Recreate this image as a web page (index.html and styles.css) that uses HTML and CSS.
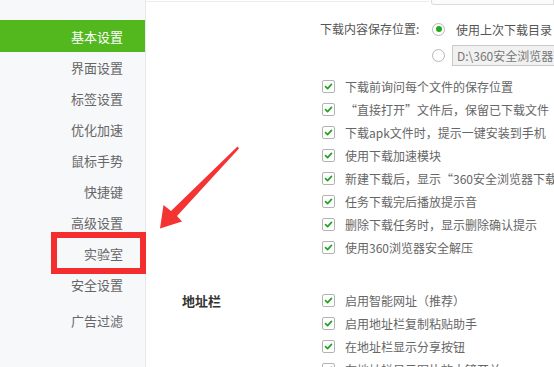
FILE: index.html
```html
<!DOCTYPE html>
<html lang="zh-CN">
<head>
<meta charset="utf-8">
<link rel="stylesheet" href="styles.css">
</head>
<body>
<div class="app">
  <nav class="sidebar">
    <div class="nav-item active">基本设置</div>
    <div class="nav-item">界面设置</div>
    <div class="nav-item">标签设置</div>
    <div class="nav-item">优化加速</div>
    <div class="nav-item">鼠标手势</div>
    <div class="nav-item">快捷键</div>
    <div class="nav-item">高级设置</div>
    <div class="nav-item">实验室</div>
    <div class="nav-item">安全设置</div>
    <div class="nav-item last">广告过滤</div>
  </nav>
  <main class="main">
    <div class="topbar"><div class="top-line"></div><div class="top-box"></div></div>
    <section class="section">
      <div class="sec-label"></div>
      <div class="sec-body">
        <div class="save-grid">
          <div class="save-label">下载内容保存位置:</div>
          <div class="opt"><span class="radio on"></span><span class="opt-text">使用上次下载目录</span></div>
          <div></div>
          <div class="opt"><span class="radio"></span><div class="path-input">D:\360安全浏览器下载</div></div>
        </div>
        <div class="checks">
          <div class="check-row"><span class="cb"><svg viewBox="0 0 13 13"><path d="M3 6.6l2.4 2.4 4.6-5" /></svg></span><span>下载前询问每个文件的保存位置</span></div>
          <div class="check-row"><span class="cb"><svg viewBox="0 0 13 13"><path d="M3 6.6l2.4 2.4 4.6-5" /></svg></span><span>“直接打开”文件后，保留已下载文件</span></div>
          <div class="check-row"><span class="cb"><svg viewBox="0 0 13 13"><path d="M3 6.6l2.4 2.4 4.6-5" /></svg></span><span>下载apk文件时，提示一键安装到手机</span></div>
          <div class="check-row"><span class="cb"><svg viewBox="0 0 13 13"><path d="M3 6.6l2.4 2.4 4.6-5" /></svg></span><span>使用下载加速模块</span></div>
          <div class="check-row"><span class="cb"><svg viewBox="0 0 13 13"><path d="M3 6.6l2.4 2.4 4.6-5" /></svg></span><span>新建下载后，显示“360安全浏览器下载”窗口</span></div>
          <div class="check-row"><span class="cb"><svg viewBox="0 0 13 13"><path d="M3 6.6l2.4 2.4 4.6-5" /></svg></span><span>任务下载完后播放提示音</span></div>
          <div class="check-row"><span class="cb"><svg viewBox="0 0 13 13"><path d="M3 6.6l2.4 2.4 4.6-5" /></svg></span><span>删除下载任务时，显示删除确认提示</span></div>
          <div class="check-row"><span class="cb"><svg viewBox="0 0 13 13"><path d="M3 6.6l2.4 2.4 4.6-5" /></svg></span><span>使用360浏览器安全解压</span></div>
        </div>
      </div>
    </section>
    <section class="section addr">
      <div class="sec-label bold">地址栏</div>
      <div class="sec-body">
        <div class="checks">
          <div class="check-row"><span class="cb"><svg viewBox="0 0 13 13"><path d="M3 6.6l2.4 2.4 4.6-5" /></svg></span><span>启用智能网址（推荐）</span></div>
          <div class="check-row"><span class="cb"><svg viewBox="0 0 13 13"><path d="M3 6.6l2.4 2.4 4.6-5" /></svg></span><span>启用地址栏复制粘贴助手</span></div>
          <div class="check-row"><span class="cb"><svg viewBox="0 0 13 13"><path d="M3 6.6l2.4 2.4 4.6-5" /></svg></span><span>在地址栏显示分享按钮</span></div>
          <div class="check-row"><span class="cb"><svg viewBox="0 0 13 13"><path d="M3 6.6l2.4 2.4 4.6-5" /></svg></span><span>在地址栏显示图片放大镜开关</span></div>
        </div>
      </div>
    </section>
  </main>
  <div class="highlight"></div>
  <svg class="arrow" width="554" height="367" viewBox="0 0 554 367">
    <polygon points="237.5,146.5 239,148.5 177,216 182,221.5 160,228.5 163.5,205 171,211" fill="#f43333"/>
  </svg>
</div>
</body>
</html>
```

FILE: styles.css
```css
html, body {
  margin: 0;
  padding: 0;
  background: #fff;
}
body {
  font-family: "Noto Sans CJK SC", "Noto Sans", sans-serif;
  font-size: 12px;
  color: #666;
}
.app {
  position: relative;
  display: flex;
  width: 554px;
  height: 367px;
  overflow: hidden;
}
.sidebar {
  width: 145px;
  flex: none;
  background: #f7f8fa;
  border-right: 1px solid #e6e8ec;
  padding-top: 20px;
  box-sizing: content-box;
}
.nav-item {
  height: 31px;
  line-height: 31px;
  text-align: right;
  padding-right: 22px;
  font-size: 13px;
  color: #666;
}
.nav-item.active {
  height: 32px;
  line-height: 33px;
  background: #52b81e;
  color: #fff;
}
.nav-item.last {
  margin-top: 5px;
}
.main {
  flex: 1;
  min-width: 0;
  overflow: hidden;
  white-space: nowrap;
}
.topbar {
  display: flex;
  height: 5px;
}
.top-line {
  width: 283px;
  height: 1px;
  border-bottom: 1px solid #ececec;
}
.top-box {
  flex: 1;
  height: 4px;
  margin-left: 2px;
  border: 1px solid #dcdcdc;
  border-top: none;
  border-radius: 0 0 0 3px;
  background: #fbfbfb;
}
.section {
  display: flex;
  margin-left: 36px;
}
.sec-label {
  width: 140px;
  flex: none;
  height: 23px;
  line-height: 23px;
  font-size: 13px;
  color: #333;
}
.sec-label.bold {
  font-weight: bold;
}
.sec-body {
  min-width: 0;
}
.save-grid {
  display: grid;
  grid-template-columns: 112px auto;
  row-gap: 4px;
  margin-top: 13px;
  margin-left: -2px;
}
.save-label {
  height: 22px;
  line-height: 22px;
  color: #555;
}
.opt {
  display: flex;
  align-items: center;
  height: 22px;
}
.radio {
  width: 13px;
  height: 13px;
  border: 1px solid #b8b8b8;
  border-radius: 50%;
  box-sizing: border-box;
  position: relative;
  flex: none;
  background: #fff;
}
.radio.on::after {
  content: "";
  position: absolute;
  left: 2.5px;
  top: 2.5px;
  width: 6px;
  height: 6px;
  border-radius: 50%;
  background: #1faa1f;
}
.opt-text {
  margin-left: 11px;
  color: #555;
}
.path-input {
  margin-left: 7px;
  height: 21px;
  line-height: 20px;
  width: 200px;
  box-sizing: border-box;
  border: 1px solid #c9c9c9;
  background: #f1f1f1;
  padding-left: 4px;
  color: #777;
}
.checks {
  margin-top: 9px;
}
.check-row {
  display: flex;
  align-items: center;
  height: 23px;
}
.cb {
  width: 13px;
  height: 13px;
  border: 1px solid #b3b3b3;
  border-radius: 2px;
  box-sizing: border-box;
  background: #fff;
  margin-right: 10px;
  flex: none;
  display: flex;
}
.cb svg {
  width: 11px;
  height: 11px;
}
.cb path {
  fill: none;
  stroke: #22a322;
  stroke-width: 2;
  stroke-linecap: round;
  stroke-linejoin: round;
}
.addr {
  margin-top: 30px;
}
.addr .checks {
  margin-top: 0;
}
.highlight {
  position: absolute;
  left: 51px;
  top: 232px;
  width: 95px;
  height: 42px;
  box-sizing: border-box;
  border: 6px solid #f42e2e;
}
.arrow {
  position: absolute;
  left: 0;
  top: 0;
  pointer-events: none;
}
```
